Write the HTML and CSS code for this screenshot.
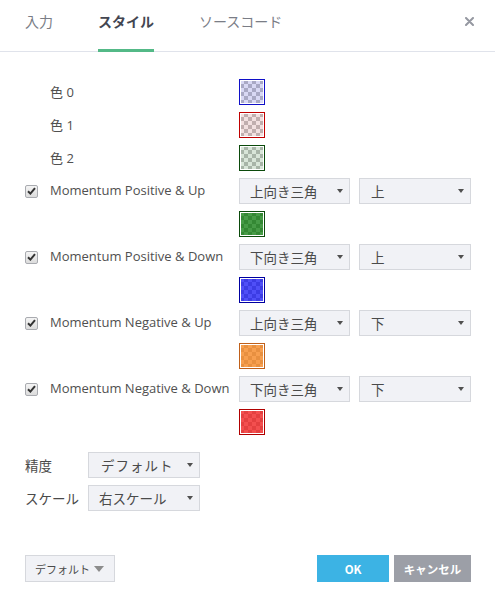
FILE: index.html
```html
<!DOCTYPE html>
<html lang="ja">
<head>
<meta charset="utf-8">
<link rel="stylesheet" href="styles.css">
</head>
<body>
<div class="dialog">
  <div class="header">
    <div class="tab">入力</div>
    <div class="tab active">スタイル</div>
    <div class="tab">ソースコード</div>
    <div class="close">
      <svg width="9" height="9" viewBox="0 0 9 9"><path d="M1 1L8 8M8 1L1 8" stroke="#9598a1" stroke-width="2" stroke-linecap="round"/></svg>
    </div>
  </div>

  <div class="content">
    <div class="row"><span class="nocheck"></span><span class="label">色 0</span><span class="swatch sw-c0"></span></div>
    <div class="row"><span class="nocheck"></span><span class="label">色 1</span><span class="swatch sw-c1"></span></div>
    <div class="row"><span class="nocheck"></span><span class="label">色 2</span><span class="swatch sw-c2"></span></div>

    <div class="row">
      <span class="check"><svg width="9" height="8" viewBox="0 0 9 8"><path d="M1 4.2L3.4 6.6L8 1.2" fill="none" stroke="#333" stroke-width="2"/></svg></span>
      <span class="label">Momentum Positive &amp; Up</span>
      <div class="select sel-shape"><span>上向き三角</span><i class="arrow"></i></div>
      <div class="select sel-pos"><span>上</span><i class="arrow"></i></div>
    </div>
    <div class="row"><span class="nocheck"></span><span class="label"></span><span class="swatch sw-green"></span></div>

    <div class="row">
      <span class="check"><svg width="9" height="8" viewBox="0 0 9 8"><path d="M1 4.2L3.4 6.6L8 1.2" fill="none" stroke="#333" stroke-width="2"/></svg></span>
      <span class="label">Momentum Positive &amp; Down</span>
      <div class="select sel-shape"><span>下向き三角</span><i class="arrow"></i></div>
      <div class="select sel-pos"><span>上</span><i class="arrow"></i></div>
    </div>
    <div class="row"><span class="nocheck"></span><span class="label"></span><span class="swatch sw-blue"></span></div>

    <div class="row">
      <span class="check"><svg width="9" height="8" viewBox="0 0 9 8"><path d="M1 4.2L3.4 6.6L8 1.2" fill="none" stroke="#333" stroke-width="2"/></svg></span>
      <span class="label">Momentum Negative &amp; Up</span>
      <div class="select sel-shape"><span>上向き三角</span><i class="arrow"></i></div>
      <div class="select sel-pos"><span>下</span><i class="arrow"></i></div>
    </div>
    <div class="row"><span class="nocheck"></span><span class="label"></span><span class="swatch sw-orange"></span></div>

    <div class="row">
      <span class="check"><svg width="9" height="8" viewBox="0 0 9 8"><path d="M1 4.2L3.4 6.6L8 1.2" fill="none" stroke="#333" stroke-width="2"/></svg></span>
      <span class="label">Momentum Negative &amp; Down</span>
      <div class="select sel-shape"><span>下向き三角</span><i class="arrow"></i></div>
      <div class="select sel-pos"><span>下</span><i class="arrow"></i></div>
    </div>
    <div class="row"><span class="nocheck"></span><span class="label"></span><span class="swatch sw-red"></span></div>

    <div class="row prec first">
      <span class="plabel">精度</span>
      <div class="select sel-small"><span class="wide">デフォルト</span><i class="arrow"></i></div>
    </div>
    <div class="row prec">
      <span class="plabel">スケール</span>
      <div class="select sel-small"><span>右スケール</span><i class="arrow"></i></div>
    </div>
  </div>

  <div class="footer">
    <div class="btn-default"><span>デフォルト</span><i class="arrow big"></i></div>
    <div class="spacer"></div>
    <div class="btn ok">OK</div>
    <div class="btn cancel">キャンセル</div>
  </div>
</div>
</body>
</html>
```

FILE: styles.css
```css
* { box-sizing: border-box; }
html, body {
  margin: 0;
  padding: 0;
  background: #fff;
}
body {
  font-family: "Open Sans", "Noto Sans CJK JP", sans-serif;
  font-size: 13px;
  color: #4a4a4a;
  width: 495px;
  height: 605px;
  overflow: hidden;
}
.dialog {
  width: 495px;
  height: 605px;
}
.header {
  display: flex;
  height: 52px;
  border-bottom: 1px solid #e0e3eb;
  padding-left: 25px;
}
.tab {
  height: 52px;
  margin-bottom: -1px;
  display: flex;
  align-items: center;
  padding-bottom: 7px;
  margin-right: 45px;
  font-size: 14px;
  color: #7a7d86;
  border-bottom: 3px solid transparent;
  font-family: "Noto Sans CJK JP", sans-serif;
}
.tab.active {
  color: #434651;
  font-weight: bold;
  border-bottom-color: #53b987;
}
.close {
  margin-left: auto;
  padding-right: 21px;
  display: flex;
  align-items: center;
  padding-bottom: 8px;
}
.close svg { display: block; }

.content {
  padding: 27px 24px 0 25px;
}
.row {
  display: flex;
  align-items: center;
  height: 26px;
  margin-bottom: 7px;
}
.nocheck, .check {
  width: 13px;
  height: 13px;
  margin-right: 12px;
  flex: none;
}
.check {
  border: 1px solid #a9abb0;
  border-radius: 2px;
  background: linear-gradient(#f4f4f4, #dcdcdc);
  display: flex;
  align-items: center;
  justify-content: center;
}
.check svg { display: block; }
.label {
  width: 189px;
  flex: none;
  white-space: nowrap;
  color: #505050;
  padding-bottom: 2px;
}
.swatch {
  width: 26px;
  height: 26px;
  flex: none;
  border: 1px solid;
  box-shadow: inset 0 0 0 1px #fff;
  background-size: 100% 100%, 8px 8px;
}
.sw-c0 {
  border-color: #1010c8;
  background-image: linear-gradient(rgba(60,60,200,0.2), rgba(60,60,200,0.2)), repeating-conic-gradient(#c4c4c4 0 25%, #fff 0 50%);
}
.sw-c1 {
  border-color: #c00000;
  background-image: linear-gradient(rgba(170,60,60,0.16), rgba(170,60,60,0.16)), repeating-conic-gradient(#c4c4c4 0 25%, #fff 0 50%);
}
.sw-c2 {
  border-color: #0b4a0b;
  background-image: linear-gradient(rgba(40,110,40,0.18), rgba(40,110,40,0.18)), repeating-conic-gradient(#c4c4c4 0 25%, #fff 0 50%);
}
.sw-green {
  border-color: #0b4a0b;
  background-image: linear-gradient(rgba(25,130,25,0.8), rgba(25,130,25,0.8)), repeating-conic-gradient(#a0a0a0 0 25%, #fff 0 50%);
}
.sw-blue {
  border-color: #0000a0;
  background-image: linear-gradient(rgba(35,35,245,0.8), rgba(35,35,245,0.8)), repeating-conic-gradient(#a0a0a0 0 25%, #fff 0 50%);
}
.sw-orange {
  border-color: #c0601a;
  background-image: linear-gradient(rgba(245,135,35,0.8), rgba(245,135,35,0.8)), repeating-conic-gradient(#b4b4b4 0 25%, #fff 0 50%);
}
.sw-red {
  border-color: #b00000;
  background-image: linear-gradient(rgba(240,35,35,0.8), rgba(240,35,35,0.8)), repeating-conic-gradient(#b4b4b4 0 25%, #fff 0 50%);
}

.select {
  height: 26px;
  background: #f1f2f6;
  border: 1px solid #d6d8dd;
  display: flex;
  align-items: center;
  padding: 0 6px 0 10px;
  font-family: "Noto Sans CJK JP", sans-serif;
  font-size: 13.5px;
  color: #4a4a4a;
  flex: none;
}
.select span { flex: 1; white-space: nowrap; }
.select span.wide { letter-spacing: 1px; padding-left: 2px; }
.sel-shape { width: 111px; margin-right: 9px; }
.sel-pos { width: 112px; padding-left: 11px; }
.sel-small { width: 112px; padding-left: 10px; }
.arrow {
  width: 0;
  height: 0;
  border-left: 3.5px solid transparent;
  border-right: 3.5px solid transparent;
  border-top: 4px solid #505050;
  flex: none;
}
.prec.first { margin-top: 17px; }
.plabel {
  width: 63px;
  flex: none;
  font-family: "Noto Sans CJK JP", sans-serif;
  font-size: 13.5px;
  color: #4a4a4a;
}

.footer {
  display: flex;
  align-items: center;
  padding: 0 24px 0 25px;
  margin-top: 44px;
}
.btn-default {
  width: 90px;
  height: 27px;
  background: #f1f2f6;
  border: 1px solid #d6d8dd;
  display: flex;
  align-items: center;
  padding: 0 10px 0 9px;
  font-family: "Noto Sans CJK JP", sans-serif;
  font-size: 11px;
  color: #4a4a4a;
}
.btn-default span { flex: 1; white-space: nowrap; }
.arrow.big {
  border-left-width: 5px;
  border-right-width: 5px;
  border-top: 6px solid #8c8c8c;
}
.spacer { flex: 1; }
.btn {
  height: 27px;
  display: flex;
  align-items: center;
  justify-content: center;
  color: #fff;
  font-weight: bold;
  font-family: "Noto Sans CJK JP", sans-serif;
}
.ok {
  width: 72px;
  background: #3cb3e4;
  font-size: 11.5px;
  margin-right: 5px;
}
.cancel {
  width: 77px;
  background: #9c9fa7;
  font-size: 11.5px;
}
```
